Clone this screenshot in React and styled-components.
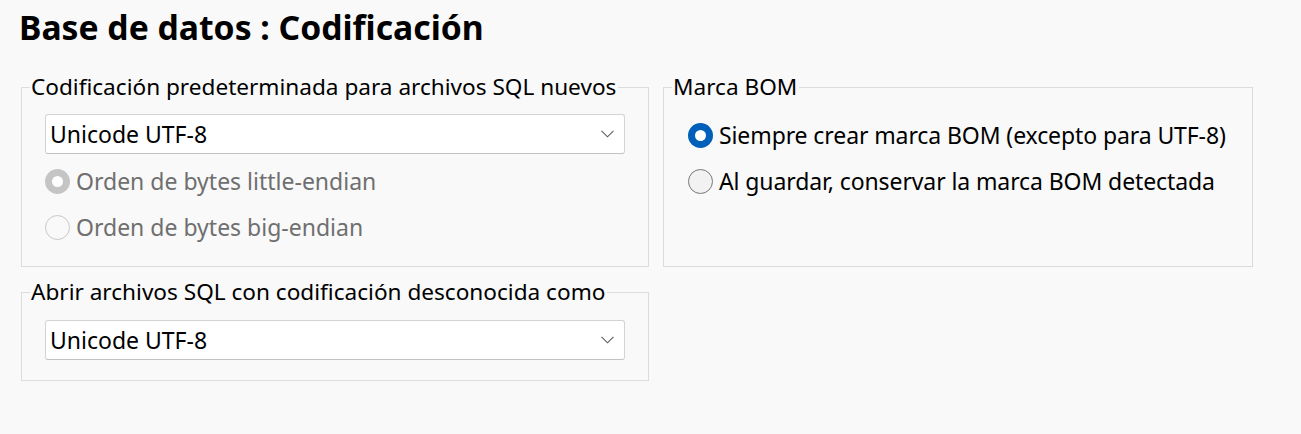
import styled, { createGlobalStyle } from "styled-components"

const GlobalStyle = createGlobalStyle`
  html, body {
    margin: 0;
    padding: 0;
    background: #f9f9f9;
  }
  body {
    font-family: "Noto Sans", "Open Sans", sans-serif;
    color: #1a1a1a;
  }
`

const Page = styled.div`
  width: 1301px;
  height: 434px;
  padding: 5px 0 0 19px;
  box-sizing: border-box;
  background: #f9f9f9;
`

const Title = styled.h1`
  margin: 0;
  font-size: 33.7px;
  line-height: 44px;
  font-weight: 700;
  color: #000;
`

const Grid = styled.div`
  display: grid;
  grid-template-columns: 628px 590px;
  column-gap: 14px;
  row-gap: 12px;
  margin: 25px 0 0 2px;
  align-items: start;
`

const Group = styled.fieldset`
  margin: 0;
  min-width: 0;
  border: 1px solid #dcdcdc;
  padding: 0;
  height: ${(p) => p.$height};
  box-sizing: border-box;
`

const Legend = styled.legend`
  margin-left: 8px;
  padding: 0 2px 0 1px;
  font-size: 22.6px;
  line-height: 26px;
  color: #000;
`

const Body = styled.div`
  padding: ${(p) => p.$pad};
  display: flex;
  flex-direction: column;
`

const Select = styled.div`
  height: 40px;
  box-sizing: border-box;
  display: flex;
  align-items: center;
  justify-content: space-between;
  padding: 0 10px 0 4px;
  background: #fff;
  border: 1px solid #d3d3d3;
  border-bottom-color: #c2c2c2;
  border-radius: 3px;
  font-size: 23px;
  color: #000;
  margin-bottom: ${(p) => p.$mb || 0};
`

const Options = styled.div`
  display: flex;
  flex-direction: column;
  gap: 6px;
`

const Option = styled.label`
  display: flex;
  align-items: center;
  height: 40px;
  gap: 6px;
  font-size: 23px;
  white-space: nowrap;
  letter-spacing: ${(p) => p.$tight ? "-0.1px" : "0"};
  color: ${(p) => (p.$disabled ? "#6f6f6f" : "#000")};
`

const Radio = styled.span`
  width: 25px;
  height: 25px;
  box-sizing: border-box;
  border-radius: 50%;
  flex-shrink: 0;
  display: flex;
  align-items: center;
  justify-content: center;
  ${(p) => {
    if (p.$checked && p.$disabled) return "background: #c5c5c5;"
    if (p.$checked) return "background: #005fb8;"
    if (p.$disabled) return "border: 1px solid #c8c8c8; background: transparent;"
    return "border: 1px solid #777; background: #f2f2f2;"
  }}
  &::after {
    content: "";
    display: ${(p) => (p.$checked ? "block" : "none")};
    width: 11px;
    height: 11px;
    border-radius: 50%;
    background: #fff;
  }
`

const Chevron = () => (
  <svg width="13" height="8" viewBox="0 0 13 8">
    <polyline
      points="0.5,0.8 6.5,6.8 12.5,0.8"
      fill="none"
      stroke="#5c5c5c"
      strokeWidth="1.1"
    />
  </svg>
)

const RadioOption = ({ checked, disabled, tight, children }) => (
  <Option $disabled={disabled} $tight={tight}>
    <Radio $checked={checked} $disabled={disabled} />
    {children}
  </Option>
)

export default function App() {
  return (
    <Page>
      <GlobalStyle />
      <Title>Base de datos : Codificación</Title>
      <Grid>
        <Group $height="193px">
          <Legend>Codificación predeterminada para archivos SQL nuevos</Legend>
          <Body $pad="14px 23px 0 23px">
            <Select $mb="7px">
              Unicode UTF-8
              <Chevron />
            </Select>
            <Options>
              <RadioOption checked disabled>
                Orden de bytes little-endian
              </RadioOption>
              <RadioOption disabled>Orden de bytes big-endian</RadioOption>
            </Options>
          </Body>
        </Group>
        <Group $height="193px">
          <Legend>Marca BOM</Legend>
          <Body $pad="15px 24px 0 24px">
            <Options>
              <RadioOption checked tight>
                Siempre crear marca BOM (excepto para UTF-8)
              </RadioOption>
              <RadioOption tight>
                Al guardar, conservar la marca BOM detectada
              </RadioOption>
            </Options>
          </Body>
        </Group>
        <Group $height="102px">
          <Legend>Abrir archivos SQL con codificación desconocida como</Legend>
          <Body $pad="15px 23px 0 23px">
            <Select>
              Unicode UTF-8
              <Chevron />
            </Select>
          </Body>
        </Group>
      </Grid>
    </Page>
  )
}
